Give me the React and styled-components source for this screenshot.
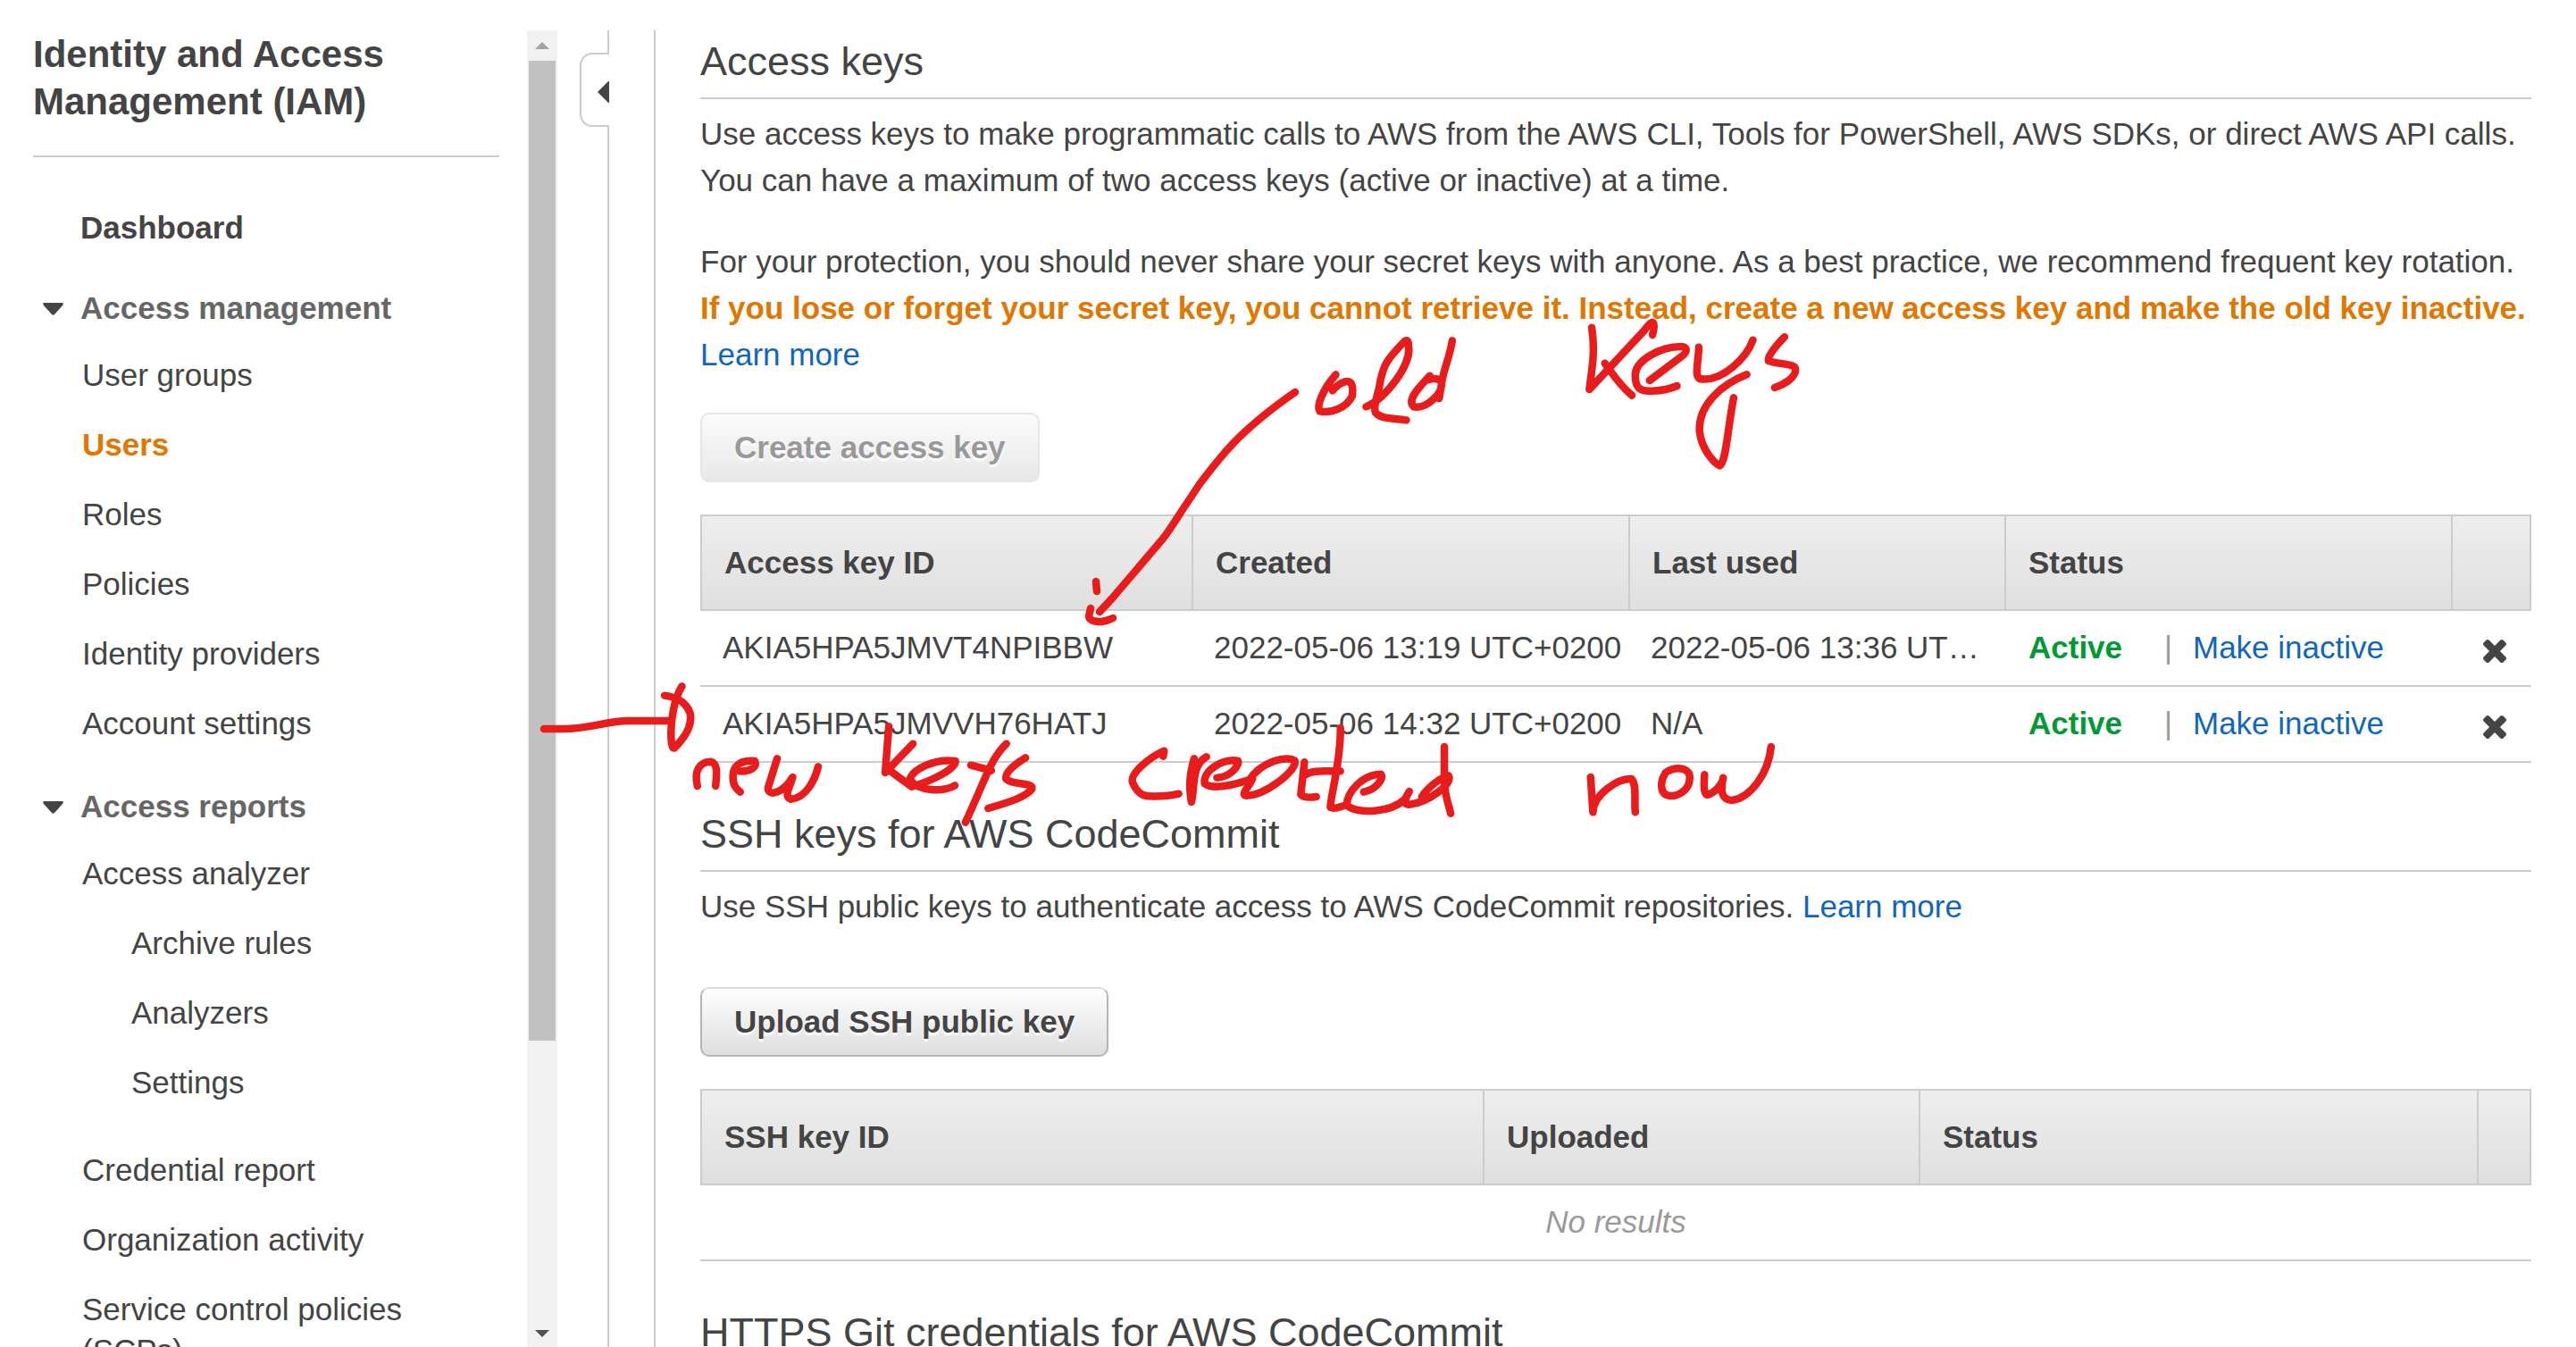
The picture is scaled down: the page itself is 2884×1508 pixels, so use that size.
import React from 'react';
import styled, { createGlobalStyle } from 'styled-components';

const color = {
  text: '#444',
  muted: '#666',
  faint: '#999',
  line: '#ccc',
  orange: '#e07700',
  link: '#1166bb',
  green: '#009933',
  ink: '#e81c1c',
};

const GlobalStyle = createGlobalStyle`
  *, *::before, *::after { box-sizing: border-box; }
  body {
    margin: 0;
    background: #fff;
    color: ${color.text};
    font-family: "Liberation Sans", Arial, Helvetica, sans-serif;
    font-size: 35px;
    line-height: 52px;
  }
`;

const Page = styled.div`
  position: relative;
  display: flex;
  height: 100vh;
  padding-top: 34px;
  overflow: hidden;
`;

/* ---------- Sidebar ---------- */

const Sidebar = styled.nav`
  flex: 0 0 590px;
  padding: 0 31px 0 37px;
  overflow: hidden;
`;

const SidebarTitle = styled.h1`
  margin: 0;
  padding-bottom: 34px;
  border-bottom: 2px solid ${color.line};
  font-size: 42px;
  line-height: 53px;
  font-weight: bold;
`;

const NavGroup = styled.section`
  margin-top: ${(p) => p.$gap}px;
  line-height: 46px;
`;

const GroupButton = styled.button`
  display: grid;
  grid-template-columns: 42px auto;
  align-items: center;
  margin: 0 0 29px;
  padding: 0 0 0 11px;
  border: 0;
  background: none;
  color: ${color.muted};
  font: inherit;
  font-weight: bold;
  text-align: left;
`;

const NavList = styled.ul`
  display: flex;
  flex-direction: column;
  gap: 32px;
  margin: 0;
  padding: 0 0 0 55px;
  list-style: none;
`;

const SubList = styled(NavList)`
  margin-top: 32px;
  padding-bottom: 20px;
`;

const NavLink = styled.a`
  display: block;
  color: ${(p) => (p.$active ? color.orange : color.text)};
  font-weight: ${(p) => (p.$active ? 'bold' : 'normal')};
  text-decoration: none;
`;

const DashboardLink = styled(NavLink)`
  margin: 56px 0 0 53px;
  font-weight: bold;
  line-height: 46px;
`;

/* ---------- Scroll track and collapse rail ---------- */

const ScrollTrack = styled.div`
  flex: 0 0 34px;
  display: grid;
  grid-template-rows: 34px 1097fr 313fr 30px;
  padding: 0 2px;
  background: #f1f1f1;
`;

const ScrollArrow = styled.span`
  display: flex;
  align-items: center;
  justify-content: center;
`;

const ScrollThumb = styled.div`
  background: #c1c1c1;
`;

const Rail = styled.div`
  flex: 0 0 58px;
  display: flex;
  flex-direction: column;
  margin-right: 50px;
`;

const RailLine = styled.div`
  flex: ${(p) => (p.$short ? '0 0 25px' : '1')};
  border-right: 2px solid ${color.line};
`;

const CollapseButton = styled.button`
  display: flex;
  align-items: center;
  justify-content: flex-end;
  height: 83px;
  margin: 0 0 0 25px;
  padding: 4px 0 0;
  border: 2px solid ${color.line};
  border-right: 0;
  border-radius: 14px 0 0 14px;
  background: #fff;
`;

/* ---------- Main column ---------- */

const Main = styled.main`
  flex: 1;
  min-width: 0;
  padding: 8px 50px 0;
  border-left: 2px solid ${color.line};
`;

const Section = styled.section`
  margin-bottom: 53px;
`;

const Heading = styled.h2`
  margin: 0 0 13px;
  padding-bottom: 13px;
  border-bottom: 2px solid ${color.line};
  font-size: 45px;
  line-height: 54px;
  font-weight: normal;
`;

const Text = styled.p`
  margin: 0 0 39px;
`;

const Warning = styled.strong`
  color: ${color.orange};
`;

const Link = styled.a`
  color: ${color.link};
  text-decoration: none;
`;

const ActionButton = styled.button`
  display: block;
  margin: ${(p) => p.$gap || 0}px 0 36px;
  padding: 14px 36px;
  border: 2px solid #b5b5b5;
  border-top-color: #dcdcdc;
  border-radius: 10px;
  background: linear-gradient(#fff, #ddd) border-box;
  color: ${color.text};
  font: inherit;
  font-weight: bold;
  line-height: 46px;
  text-shadow: 0 3px 2px #fff;

  &:disabled {
    border-color: #e6e6e6;
    background: linear-gradient(#fcfcfc, #e7e7e7) border-box;
    color: ${color.faint};
  }
`;

const Table = styled.table`
  width: 100%;
  table-layout: fixed;
  border-collapse: separate;
  border-spacing: 0;
`;

const Col = styled.col`
  width: ${(p) => p.$width}px;
`;

const HeadRow = styled.tr`
  background: linear-gradient(#eee, #dfdfdf);
`;

const HeadCell = styled.th`
  padding: 26px 0 26px 25px;
  border: 2px solid ${color.line};
  border-right-width: 0;
  text-align: left;

  &:last-child {
    border-right-width: 2px;
  }
`;

const Cell = styled.td`
  padding: 15px 0 16px 25px;
  border-bottom: 2px solid ${color.line};
  white-space: nowrap;
`;

const EmptyCell = styled(Cell)`
  padding-left: 0;
  color: ${color.faint};
  font-style: italic;
  text-align: center;
`;

const StatusLine = styled.div`
  display: flex;
  padding-left: 2px;
`;

const Active = styled.strong`
  flex: 0 0 152px;
  color: ${color.green};
`;

const Separator = styled.span`
  flex: 0 0 32px;
  color: ${color.faint};
`;

const DeleteButton = styled.button`
  display: block;
  margin-left: 11px;
  padding: 8px 0 0;
  border: 0;
  background: none;
  line-height: 0;
`;

/* ---------- Pen notes over the page ---------- */

const PenLayer = styled.svg`
  position: absolute;
  top: 0;
  left: 0;
  pointer-events: none;
  fill: none;
  stroke: ${color.ink};
  stroke-width: 8.5;
  stroke-linecap: round;
  stroke-linejoin: round;

  path {
    vector-effect: non-scaling-stroke;
  }
`;

const Triangle = ({ points, width, height, fill = color.text }) => (
  <svg width={width} height={height} viewBox={`0 0 ${width} ${height}`} aria-hidden="true">
    <polygon points={points} fill={fill} />
  </svg>
);

const Caret = () => (
  <svg width="23" height="16" viewBox="0 0 23 16" aria-hidden="true">
    <path d="M1 2H22Q23.500 3 22 5L13 15Q11.500 16.500 10 15L1 5Q-.5 3 1 2Z" fill={color.text} />
  </svg>
);

const Cross = () => (
  <svg width="26" height="26" viewBox="302 366 1188 1188" aria-hidden="true">
    <path
      fill={color.text}
      d="M1490 1322q0 40-28 68l-136 136q-28 28-68 28t-68-28l-294-294-294 294q-28 28-68 28t-68-28l-136-136q-28-28-28-68t28-68l294-294-294-294q-28-28-28-68t28-68l136-136q28-28 68-28t68 28l294 294 294-294q28-28 68-28t68 28l136 136q28 28 28 68t-28 68l-294 294 294 294q28 28 28 68z"
    />
  </svg>
);

const PenNotes = () => (
  <PenLayer width="2884" height="1508" viewBox="0 0 2884 1508" aria-hidden="true">
    {/* arrow from the upper note to the first key */}
    <path d="M1450 439C1424 457 1401 475 1380 497C1366 512 1355 526 1343 542L1323 572C1316 583 1310 593 1302 603L1245 670L1231 685" />
    <path d="M1221 681L1219 690Q1220 696 1233 696Q1240 695 1246 692" />
    <path d="M1227 651L1228 662" />
    {/* arrow to the second key */}
    <path d="M609 816H630C660 816 680 807 703 807H752" />
    <g transform="translate(740 500) scale(.5102 .33333)">
      <path d="M46 805C28 850 22 920 22 960C22 1015 28 1018 32 1008C50 980 70 940 64 895C56 860 36 842 8 836" />
      <path d="M80 1140C72 1090 84 1058 110 1058C126 1068 122 1100 120 1140" />
      <path d="M172 1090C195 1092 212 1078 206 1056C180 1052 158 1066 158 1108C158 1138 164 1148 174 1160" />
      <path d="M255 1048L235 1145C234 1178 268 1165 289 1110C284 1140 268 1175 285 1184C318 1180 338 1120 345 1075" />
      <path d="M500 940L492 1095L553 998M500 1086L550 1142C600 1120 648 1080 646 1056C600 1046 552 1085 546 1118C565 1160 620 1160 645 1138" />
      <path d="M680 1070L725 1088M758 998C722 1050 712 1120 668 1262" />
      <path d="M800 1045C775 1068 755 1095 757 1115C770 1138 818 1126 814 1150C800 1180 750 1200 718 1215" />
    </g>
    <g transform="translate(1240 680) scale(.5102 .33333)">
      <path d="M122 500L124 482C90 505 48 560 55 588C62 615 75 634 90 634Q130 636 156 626" />
      <path d="M190 508C180 560 178 600 184 654C192 600 184 530 217 502" />
      <path d="M240 572C270 570 290 530 286 515C250 508 208 550 213 592C230 612 275 598 318 575C312 600 290 630 304 632C345 634 418 545 411 515C395 498 340 512 308 585" />
      <path d="M432 520L424 628Q430 642 458 636M434 562C452 544 480 552 511 550" />
      <path d="M511 405C512 520 488 640 489 672C500 680 510 668 522 665" />
      <path d="M562 620C590 612 606 575 600 560C560 560 525 620 525 665C550 695 620 690 652 645L662 618Q645 665 662 662C705 655 760 590 748 565C730 570 700 610 690 635" />
      <path d="M739 468V590C740 630 748 660 753 692" />
      <path d="M1060 570L1065 688C1066 630 1120 572 1150 576C1162 600 1155 640 1158 688" />
      <path d="M1224 555C1250 530 1282 538 1277 580C1275 615 1250 636 1235 633C1208 630 1215 580 1222 562" />
      <path d="M1310 562C1308 600 1308 626 1316 630C1335 622 1350 590 1351 572C1345 610 1345 645 1370 648C1410 640 1450 560 1456 468" />
    </g>
    <g transform="translate(1400 340) scale(.4592 .33333)">
      <path d="M208 238C175 290 160 345 169 361C195 370 235 350 248 310C252 270 245 258 230 262C215 268 207 280 200 292" />
      <path d="M282 346C330 320 395 200 385 140Q386 118 376 126C330 190 322 210 314 280C305 330 300 350 305 366C318 388 345 384 380 391" />
      <path d="M437 242C420 270 378 320 398 346C430 355 470 300 466 262Q456 246 432 256M492 124C484 190 468 230 466 270L460 318" />
      <path d="M832 80C840 150 835 200 826 288L960 90Q974 62 980 62Q988 66 980 105M864 200C880 230 900 275 930 308" />
      <path d="M973 258L1050 178C1068 160 1064 144 1050 144C1000 144 938 190 938 240C938 285 950 296 980 293Q1015 291 1040 276" />
      <path d="M1093 146C1092 200 1082 240 1095 252C1150 265 1210 180 1225 122" />
      <path d="M1210 238C1150 270 1090 340 1095 430C1100 490 1130 535 1144 544C1160 530 1162 430 1178 316" />
      <path d="M1302 112C1275 150 1260 180 1263 192C1290 205 1330 200 1329 222C1328 250 1300 272 1278 282" />
    </g>
  </PenLayer>
);

const accessKeys = [
  { id: 'AKIA5HPA5JMVT4NPIBBW', created: '2022-05-06 13:19 UTC+0200', used: '2022-05-06 13:36 UT…' },
  { id: 'AKIA5HPA5JMVVH76HATJ', created: '2022-05-06 14:32 UTC+0200', used: 'N/A' },
];

const managementItems = ['User groups', 'Users', 'Roles', 'Policies', 'Identity providers', 'Account settings'];
const analyzerItems = ['Archive rules', 'Analyzers', 'Settings'];
const reportItems = ['Credential report', 'Organization activity', 'Service control policies (SCPs)'];

const NavItem = ({ label, active, children }) => (
  <li>
    <NavLink href="#" $active={active}>{label}</NavLink>
    {children}
  </li>
);

export default function App() {
  return (
    <>
      <GlobalStyle />
      <Page>
        <Sidebar>
          <SidebarTitle>Identity and Access Management (IAM)</SidebarTitle>
          <DashboardLink href="#">Dashboard</DashboardLink>
          <NavGroup $gap={44}>
            <GroupButton type="button"><Caret />Access management</GroupButton>
            <NavList>
              {managementItems.map((label) => (
                <NavItem key={label} label={label} active={label === 'Users'} />
              ))}
            </NavList>
          </NavGroup>
          <NavGroup $gap={47}>
            <GroupButton type="button"><Caret />Access reports</GroupButton>
            <NavList>
              <NavItem label="Access analyzer">
                <SubList>
                  {analyzerItems.map((label) => <NavItem key={label} label={label} />)}
                </SubList>
              </NavItem>
              {reportItems.map((label) => <NavItem key={label} label={label} />)}
            </NavList>
          </NavGroup>
        </Sidebar>

        <ScrollTrack aria-hidden="true">
          <ScrollArrow><Triangle width={16} height={8} points="0,8 8,0 16,8" fill="#a3a3a3" /></ScrollArrow>
          <ScrollThumb />
          <span />
          <ScrollArrow><Triangle width={16} height={8} points="0,0 16,0 8,8" fill="#505050" /></ScrollArrow>
        </ScrollTrack>

        <Rail>
          <RailLine $short />
          <CollapseButton type="button" aria-label="Collapse navigation">
            <Triangle width={13} height={24} points="0,12 12,0 13,0 13,24 12,24" />
          </CollapseButton>
          <RailLine />
        </Rail>

        <Main>
          <Section>
            <Heading>Access keys</Heading>
            <Text>
              Use access keys to make programmatic calls to AWS from the AWS CLI, Tools for PowerShell, AWS SDKs, or
              direct AWS API calls. You can have a maximum of two access keys (active or inactive) at a time.
            </Text>
            <Text>
              For your protection, you should never share your secret keys with anyone. As a best practice, we
              recommend frequent key rotation.{' '}
              <Warning>
                If you lose or forget your secret key, you cannot retrieve it. Instead, create a new access key and
                make the old key inactive.
              </Warning>{' '}
              <Link href="#">Learn more</Link>
            </Text>
            <ActionButton type="button" disabled>Create access key</ActionButton>
            <Table>
              <colgroup>
                <Col $width={550} />
                <Col $width={489} />
                <Col $width={421} />
                <Col $width={500} />
                <Col $width={90} />
              </colgroup>
              <thead>
                <HeadRow>
                  <HeadCell>Access key ID</HeadCell>
                  <HeadCell>Created</HeadCell>
                  <HeadCell>Last used</HeadCell>
                  <HeadCell>Status</HeadCell>
                  <HeadCell aria-label="Delete" />
                </HeadRow>
              </thead>
              <tbody>
                {accessKeys.map((key) => (
                  <tr key={key.id}>
                    <Cell>{key.id}</Cell>
                    <Cell>{key.created}</Cell>
                    <Cell>{key.used}</Cell>
                    <Cell>
                      <StatusLine>
                        <Active>Active</Active>
                        <Separator>|</Separator>
                        <Link href="#">Make inactive</Link>
                      </StatusLine>
                    </Cell>
                    <Cell>
                      <DeleteButton type="button" aria-label="Delete access key"><Cross /></DeleteButton>
                    </Cell>
                  </tr>
                ))}
              </tbody>
            </Table>
          </Section>

          <Section>
            <Heading>SSH keys for AWS CodeCommit</Heading>
            <Text>
              Use SSH public keys to authenticate access to AWS CodeCommit repositories. <Link href="#">Learn more</Link>
            </Text>
            <ActionButton type="button" $gap={64}>Upload SSH public key</ActionButton>
            <Table>
              <colgroup>
                <Col $width={876} />
                <Col $width={488} />
                <Col $width={625} />
                <Col $width={61} />
              </colgroup>
              <thead>
                <HeadRow>
                  <HeadCell>SSH key ID</HeadCell>
                  <HeadCell>Uploaded</HeadCell>
                  <HeadCell>Status</HeadCell>
                  <HeadCell aria-label="Delete" />
                </HeadRow>
              </thead>
              <tbody>
                <tr>
                  <EmptyCell colSpan={4}>No results</EmptyCell>
                </tr>
              </tbody>
            </Table>
          </Section>

          <Section>
            <Heading>HTTPS Git credentials for AWS CodeCommit</Heading>
          </Section>
        </Main>

        <PenNotes />
      </Page>
    </>
  );
}
